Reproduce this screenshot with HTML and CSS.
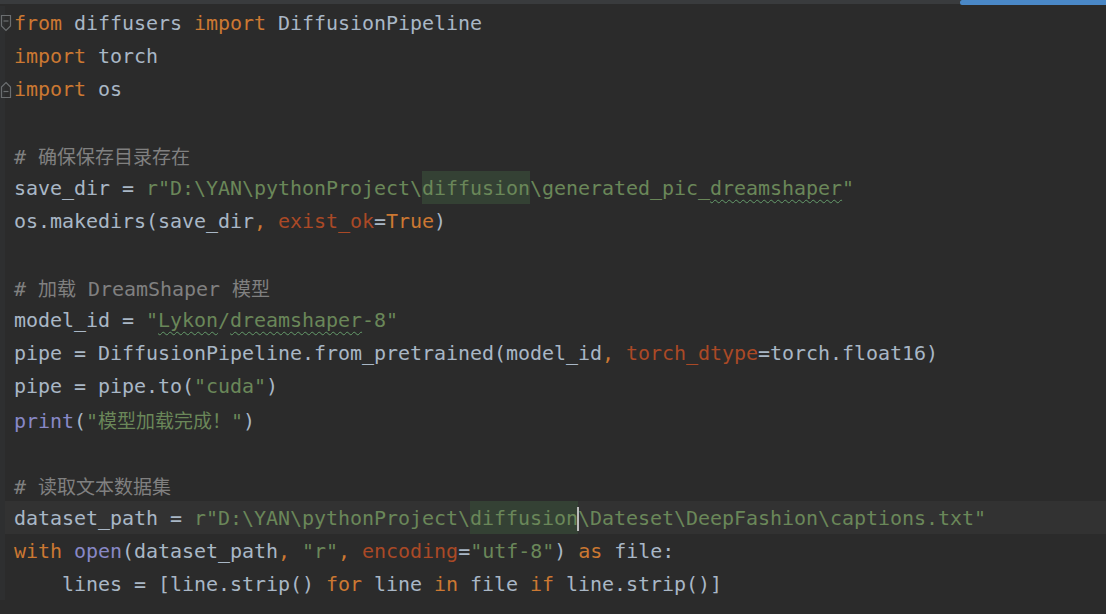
FILE: index.html
```html
<!DOCTYPE html>
<html>
<head>
<meta charset="utf-8">
<link rel="stylesheet" href="styles.css">
</head>
<body>
<div class="topbar"><div class="topbar-fill"></div><div class="tab-indicator"></div></div>
<div class="editor">
  <div class="gutter"></div>
  <div class="code">
    <div class="line"><svg class="fold" width="12" height="19" viewBox="0 0 12 19"><path d="M1.5 1.5H10.5V12L6 16.5L1.5 12Z" fill="none" stroke="#6b6e70" stroke-width="1.2"/><path d="M3.5 7H8.5" stroke="#6b6e70" stroke-width="1.2"/></svg><span class="kw">from</span> diffusers <span class="kw">import</span> DiffusionPipeline</div>
    <div class="line"><span class="kw">import</span> torch</div>
    <div class="line"><svg class="fold" width="12" height="19" viewBox="0 0 12 19"><path d="M6 2.5L10.5 7V17.5H1.5V7Z" fill="none" stroke="#6b6e70" stroke-width="1.2"/><path d="M3.5 11.5H8.5" stroke="#6b6e70" stroke-width="1.2"/></svg><span class="kw">import</span> os</div>
    <div class="line"> </div>
    <div class="line cm"># <span class="cjk">确保保存目录存在</span></div>
    <div class="line">save_dir = <span class="str">r"D:\YAN\pythonProject\<span class="occ">diffusion</span>\generated_pic_<span class="typo">dreamshaper</span>"</span></div>
    <div class="line">os.makedirs(save_dir<span class="kw">, </span><span class="kwarg">exist_ok</span>=<span class="kw">True</span>)</div>
    <div class="line"> </div>
    <div class="line cm"># <span class="cjk">加载</span> DreamShaper <span class="cjk">模型</span></div>
    <div class="line">model_id = <span class="str">"<span class="typo">Lykon</span>/<span class="typo">dreamshaper</span>-8"</span></div>
    <div class="line">pipe = DiffusionPipeline.from_pretrained(model_id<span class="kw">, </span><span class="kwarg">torch_dtype</span>=torch.float16)</div>
    <div class="line">pipe = pipe.to(<span class="str">"cuda"</span>)</div>
    <div class="line"><span class="bi">print</span>(<span class="str">"<span class="cjk">模型加载完成！</span>"</span>)</div>
    <div class="line"> </div>
    <div class="line cm"># <span class="cjk">读取文本数据集</span></div>
    <div class="line current">dataset_path = <span class="str">r"D:\YAN\pythonProject\<span class="occ">diffusion</span><span class="caret"></span>\Dateset\DeepFashion\captions.txt"</span></div>
    <div class="line"><span class="kw">with</span> <span class="bi">open</span>(dataset_path<span class="kw">, </span><span class="str">"r"</span><span class="kw">, </span><span class="kwarg">encoding</span>=<span class="str">"utf-8"</span>) <span class="kw">as</span> file:</div>
    <div class="line">    lines = [line.strip() <span class="kw">for</span> line <span class="kw">in</span> file <span class="kw">if</span> line.strip()]</div>
  </div>
</div>
</body>
</html>
```

FILE: styles.css
```css
html, body {
  margin: 0;
  padding: 0;
  background: #2b2b2b;
  width: 1106px;
  height: 614px;
  overflow: hidden;
}

.topbar {
  display: flex;
  height: 6px;
  background: #2b2b2b;
}

.topbar-fill {
  flex: 1;
  height: 4px;
  background: #393b3d;
}

.tab-indicator {
  width: 146px;
  height: 5px;
  background: #4a88c7;
  border-top-left-radius: 2px;
  border-bottom-left-radius: 2px;
}

.editor {
  display: flex;
}

.gutter {
  width: 5px;
  flex: none;
  background: #2e2f30;
}

.code {
  flex: 1;
  font-family: "DejaVu Sans Mono", "Noto Sans CJK SC", monospace;
  font-size: 20px;
  letter-spacing: -0.04px;
  line-height: 33px;
  color: #a9b7c6;
}

.line {
  position: relative;
  box-sizing: border-box;
  height: 33px;
  padding-top: 1px;
  padding-left: 9px;
  white-space: pre;
}

.line.current {
  background: #323232;
}

.fold {
  position: absolute;
  left: -5px;
  top: 8px;
}

.kw { color: #cc7832; }
.str { color: #6a8759; }
.cm { color: #808080; }
.kwarg { color: #aa4926; }
.bi { color: #8888c6; }

.cjk {
  font-family: "Noto Sans CJK SC", sans-serif;
  font-size: 19px;
  letter-spacing: 0;
}

.occ {
  display: inline-block;
  height: 32px;
  margin-top: -1px;
  padding-top: 1px;
  line-height: 33px;
  vertical-align: top;
  background: #344134;
}

.typo {
  text-decoration: underline wavy #659c6b;
  text-decoration-thickness: 1px;
  text-underline-offset: 4px;
}

.caret {
  display: inline-block;
  position: relative;
  width: 0;
  height: 33px;
  vertical-align: top;
}

.caret::after {
  content: "";
  position: absolute;
  left: -1px;
  top: 5px;
  width: 2px;
  height: 24px;
  background: #bbbbbb;
}
```
